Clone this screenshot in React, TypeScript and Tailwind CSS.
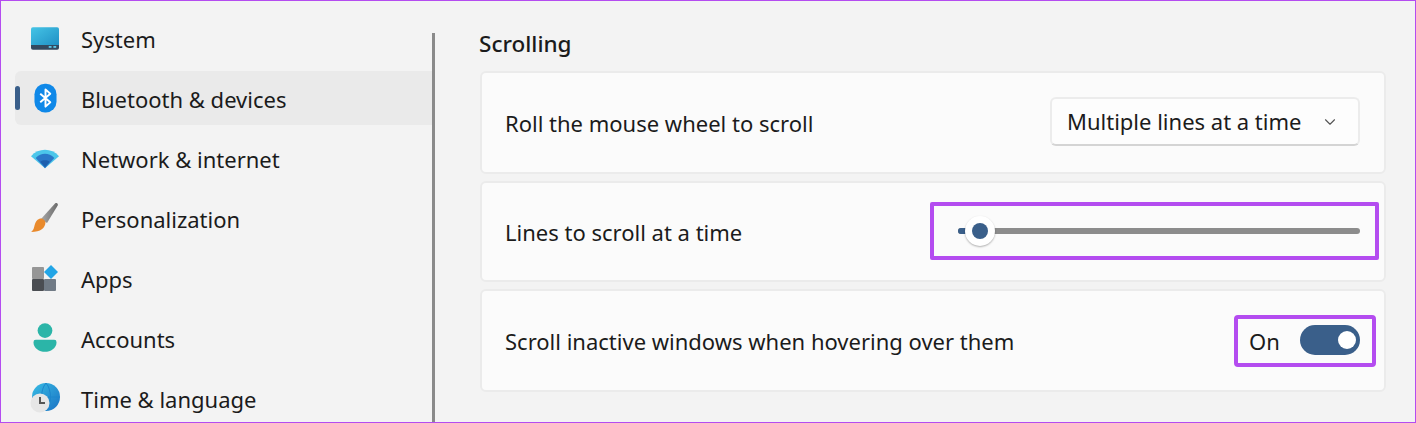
import React from 'react';
import { ChevronDown } from 'lucide-react';

function SystemIcon() {
  return (
    <svg width="28" height="23" viewBox="0 0 30 24">
      <defs>
        <linearGradient id="sys" x1="0" y1="0" x2="1" y2="1">
          <stop offset="0" stopColor="#45c4e6" />
          <stop offset="1" stopColor="#1f8fc4" />
        </linearGradient>
      </defs>
      <path d="M2 0h26a2 2 0 0 1 2 2v18H0V2a2 2 0 0 1 2-2z" fill="url(#sys)" />
      <path d="M0 19h30v3a2 2 0 0 1-2 2H2a2 2 0 0 1-2-2z" fill="#33495f" />
      <rect x="19" y="20" width="3" height="2" fill="#5cc8e8" />
      <rect x="24" y="20" width="3" height="2" fill="#5cc8e8" />
    </svg>
  );
}

function BluetoothIcon() {
  return (
    <svg width="23" height="30" viewBox="0 0 24 30">
      <rect x="0.5" width="23" height="30" rx="11" fill="#0f88e8" />
      <path d="M6.500 10.500 17 19.500 12 24V6l5 4.500L6.500 19.500" fill="none" stroke="#fff" strokeWidth="2" strokeLinejoin="round" />
    </svg>
  );
}

function WifiIcon() {
  return (
    <svg width="28" height="22" viewBox="0 0 30 22">
      <path d="M0 9C8 0 22 0 30 9L15 22z" fill="#4cc6ea" />
      <path d="M5 11C11 5 19 5 25 11L15 22z" fill="#2a78c8" />
      <path d="M10 15c3-2 7-2 10 0l-5 6z" fill="#1d5fae" />
    </svg>
  );
}

function BrushIcon() {
  return (
    <svg width="30" height="30" viewBox="0 0 30 30">
      <defs>
        <linearGradient id="brush" x1="0" y1="0" x2="1" y2="0">
          <stop offset="0" stopColor="#a8a8a8" />
          <stop offset="1" stopColor="#6b6b6b" />
        </linearGradient>
      </defs>
      <path d="M25 .5c1.500-1.200 3.400 0 2.700 2L17 20l-6-4z" fill="url(#brush)" />
      <path d="M9 16c3-1.500 6 .5 6.500 3.500C15 25 11 29 1 29c3-2 3-5 4-8 .6-2 2-4.200 4-5z" fill="#e98a2c" />
    </svg>
  );
}

function AppsIcon() {
  return (
    <svg width="26" height="26" viewBox="0 0 26 26">
      <rect x="0" y="2" width="12" height="12" rx="1" fill="#969696" />
      <rect x="0" y="14" width="12" height="12" rx="1" fill="#4a4d52" />
      <rect x="12" y="14" width="12" height="12" rx="1" fill="#707a85" />
      <path d="M19 0l7 7-7 7-7-7z" fill="#22a5e6" />
    </svg>
  );
}

function AccountIcon() {
  return (
    <svg width="24" height="30" viewBox="0 0 26 32">
      <circle cx="13" cy="8" r="8" fill="#2bb5a8" />
      <path d="M3 18h20a2.500 2.500 0 0 1 2.500 2.500C25.500 27 19 31 13 31S.5 27 .5 20.500A2.500 2.500 0 0 1 3 18z" fill="#2bb5a8" />
    </svg>
  );
}

function TimeIcon() {
  return (
    <svg width="30" height="30" viewBox="0 0 30 30">
      <defs>
        <linearGradient id="globe" x1="0" y1="0" x2="1" y2="1">
          <stop offset="0" stopColor="#38bce4" />
          <stop offset="1" stopColor="#1a72c4" />
        </linearGradient>
      </defs>
      <circle cx="16" cy="14" r="14" fill="url(#globe)" />
      <path d="M2 14h28M16 0c-6 7-6 21 0 28M16 0c6 7 6 21 0 28" stroke="#1d86cc" strokeWidth="1" fill="none" />
      <circle cx="10" cy="20" r="9.500" fill="#e6e6e6" />
      <path d="M10 14v6h5" stroke="#555" strokeWidth="2" fill="none" />
    </svg>
  );
}

const navItems = [
  { label: 'System', icon: <SystemIcon /> },
  { label: 'Bluetooth & devices', icon: <BluetoothIcon />, active: true },
  { label: 'Network & internet', icon: <WifiIcon /> },
  { label: 'Personalization', icon: <BrushIcon /> },
  { label: 'Apps', icon: <AppsIcon /> },
  { label: 'Accounts', icon: <AccountIcon /> },
  { label: 'Time & language', icon: <TimeIcon /> },
];

export default function App() {
  return (
    <div className="flex h-[423px] w-[1416px] overflow-hidden border border-[#b44cf0] bg-[#f3f3f3] font-['Noto_Sans',sans-serif] text-[22px] text-[#1b1b1b]">
      <div className="h-[480px] w-[431px] shrink-0 pt-[9px] pl-[14px]">
        {navItems.map((item) => (
          <div key={item.label} className="h-[60px] pt-[1px]">
            <div className={`relative flex h-[54px] w-full items-center rounded-l-md ${item.active ? 'bg-[#eaeaea]' : ''}`}>
              {item.active && <div className="absolute top-[15px] left-0 h-[24px] w-[5px] rounded-full bg-[#3a5f8a]" />}
              <div className="flex w-[66px] shrink-0 justify-center pr-[6px]">{item.icon}</div>
              <span className="pt-[2px]">{item.label}</span>
            </div>
          </div>
        ))}
      </div>
      <div className="mt-[32px] w-[3px] shrink-0 bg-[#8a8a8a]" />
      <div className="flex w-[951px] flex-col pt-[29px] pl-[45px]">
        <div className="mb-[13px] -ml-px text-[22.5px] leading-[28px] font-medium">Scrolling</div>
        <div className="flex w-[906px] flex-col gap-[7px]">
          <div className="flex h-[103px] items-center justify-between rounded-md border-2 border-[#ebebeb] bg-[#fbfbfb] pr-[24px] pl-[23px]">
            <span className="pt-[1px]">Roll the mouse wheel to scroll</span>
            <div className="mb-[2px] flex h-[49px] w-[310px] items-center justify-between rounded-md border-2 border-[#ececec] border-b-[#d4d4d4] bg-[#fdfdfd] pr-[19px] pl-[15px]">
              <span>Multiple lines at a time</span>
              <ChevronDown className="h-[18px] w-[18px] text-[#555]" strokeWidth={1.5} />
            </div>
          </div>
          <div className="flex h-[101px] items-center justify-between rounded-md border-2 border-[#ebebeb] bg-[#fbfbfb] pr-[5px] pl-[23px]">
            <span className="pt-[1px]">Lines to scroll at a time</span>
            <div className="mb-[1px] flex h-[58px] w-[449px] items-center rounded-[2px] border-4 border-[#b44cf0] pr-[15px] pl-[24px]">
              <div className="relative h-[6px] w-full rounded-full bg-[#8c8c8c]">
                <div className="absolute top-0 left-0 h-[6px] w-[10px] rounded-l-full bg-[#3a5f8a]" />
                <div className="absolute top-[-12px] left-[7px] flex h-[30px] w-[30px] items-center justify-center rounded-full bg-white shadow-[0_1px_2px_rgba(0,0,0,0.3)]">
                  <div className="h-[16px] w-[16px] rounded-full bg-[#3a5f8a]" />
                </div>
              </div>
            </div>
          </div>
          <div className="flex h-[103px] items-center justify-between rounded-md border-2 border-[#ebebeb] bg-[#fbfbfb] pr-[8px] pl-[23px]">
            <span className="pt-[2px]">Scroll inactive windows when hovering over them</span>
            <div className="flex h-[52px] w-[142px] items-center justify-between rounded-[4px] border-4 border-[#b44cf0] pr-[12px] pl-[11px]">
              <span className="pt-[2px]">On</span>
              <div className="mb-[2px] flex h-[30px] w-[60px] items-center justify-end rounded-full bg-[#3a5f8a] pr-[4px]">
                <div className="h-[18px] w-[18px] rounded-full bg-white" />
              </div>
            </div>
          </div>
        </div>
      </div>
    </div>
  );
}
